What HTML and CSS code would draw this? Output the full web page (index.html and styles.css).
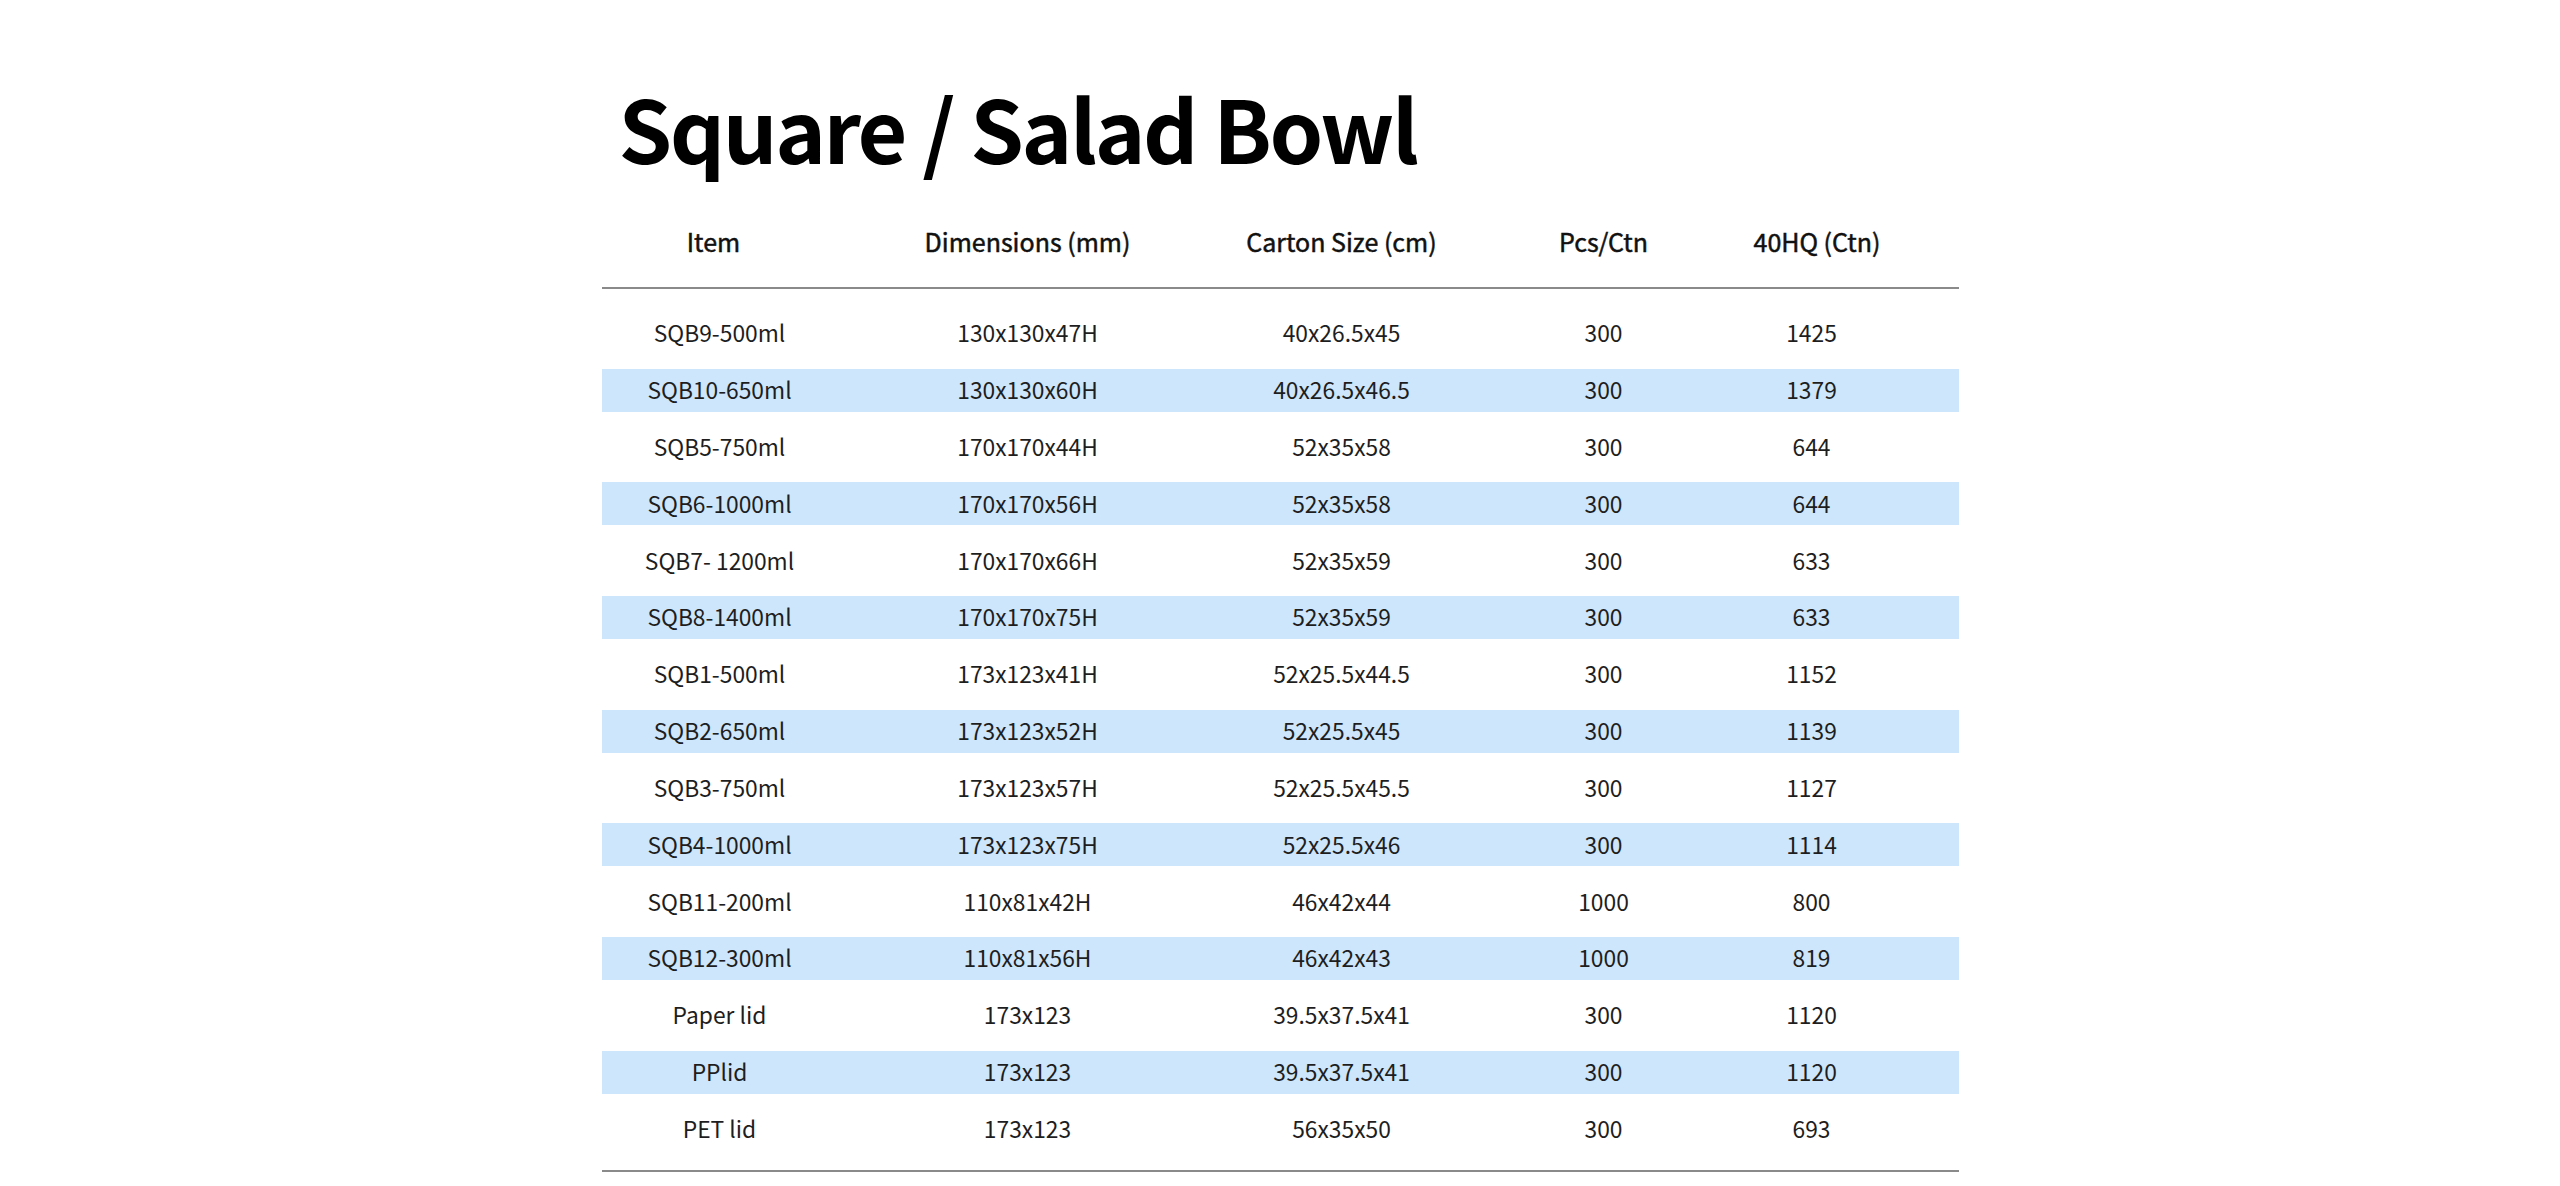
FILE: index.html
```html
<!DOCTYPE html>
<html lang="en">
<head>
<meta charset="utf-8">
<title>Square / Salad Bowl</title>
<link rel="stylesheet" href="styles.css">
</head>
<body>
<main class="sheet">
  <h1 class="title">Square / Salad Bowl</h1>
  <div class="table">
    <div class="row head">
      <div class="cell">Item</div>
      <div class="cell">Dimensions (mm)</div>
      <div class="cell">Carton Size (cm)</div>
      <div class="cell">Pcs/Ctn</div>
      <div class="cell">40HQ (Ctn)</div>
    </div>
    <div class="body">
      <div class="row"><div class="cell">SQB9-500ml</div><div class="cell">130x130x47H</div><div class="cell">40x26.5x45</div><div class="cell">300</div><div class="cell">1425</div></div>
      <div class="row alt"><div class="cell">SQB10-650ml</div><div class="cell">130x130x60H</div><div class="cell">40x26.5x46.5</div><div class="cell">300</div><div class="cell">1379</div></div>
      <div class="row"><div class="cell">SQB5-750ml</div><div class="cell">170x170x44H</div><div class="cell">52x35x58</div><div class="cell">300</div><div class="cell">644</div></div>
      <div class="row alt"><div class="cell">SQB6-1000ml</div><div class="cell">170x170x56H</div><div class="cell">52x35x58</div><div class="cell">300</div><div class="cell">644</div></div>
      <div class="row"><div class="cell">SQB7- 1200ml</div><div class="cell">170x170x66H</div><div class="cell">52x35x59</div><div class="cell">300</div><div class="cell">633</div></div>
      <div class="row alt"><div class="cell">SQB8-1400ml</div><div class="cell">170x170x75H</div><div class="cell">52x35x59</div><div class="cell">300</div><div class="cell">633</div></div>
      <div class="row"><div class="cell">SQB1-500ml</div><div class="cell">173x123x41H</div><div class="cell">52x25.5x44.5</div><div class="cell">300</div><div class="cell">1152</div></div>
      <div class="row alt"><div class="cell">SQB2-650ml</div><div class="cell">173x123x52H</div><div class="cell">52x25.5x45</div><div class="cell">300</div><div class="cell">1139</div></div>
      <div class="row"><div class="cell">SQB3-750ml</div><div class="cell">173x123x57H</div><div class="cell">52x25.5x45.5</div><div class="cell">300</div><div class="cell">1127</div></div>
      <div class="row alt"><div class="cell">SQB4-1000ml</div><div class="cell">173x123x75H</div><div class="cell">52x25.5x46</div><div class="cell">300</div><div class="cell">1114</div></div>
      <div class="row"><div class="cell">SQB11-200ml</div><div class="cell">110x81x42H</div><div class="cell">46x42x44</div><div class="cell">1000</div><div class="cell">800</div></div>
      <div class="row alt"><div class="cell">SQB12-300ml</div><div class="cell">110x81x56H</div><div class="cell">46x42x43</div><div class="cell">1000</div><div class="cell">819</div></div>
      <div class="row"><div class="cell">Paper lid</div><div class="cell">173x123</div><div class="cell">39.5x37.5x41</div><div class="cell">300</div><div class="cell">1120</div></div>
      <div class="row alt"><div class="cell">PPlid</div><div class="cell">173x123</div><div class="cell">39.5x37.5x41</div><div class="cell">300</div><div class="cell">1120</div></div>
      <div class="row"><div class="cell">PET lid</div><div class="cell">173x123</div><div class="cell">56x35x50</div><div class="cell">300</div><div class="cell">693</div></div>
    </div>
  </div>
</main>
</body>
</html>
```

FILE: styles.css
```css
html, body {
  margin: 0;
  padding: 0;
  background: #ffffff;
}

body {
  font-family: "Noto Sans CJK SC", "Noto Sans", sans-serif;
  color: #1e1e1e;
}

.sheet {
  width: 1357px;
  margin: 0 auto;
  padding-top: 67px;
}

.title {
  margin: 0;
  padding-left: 17px;
  font-size: 86px;
  font-weight: 700;
  line-height: 120px;
  color: #000000;
  letter-spacing: -2.4px;
}

.table {
  margin-top: 14px;
}

.row {
  box-sizing: border-box;
  display: grid;
  grid-template-columns: 224px 404px 224px 300px 116px;
  height: 43px;
  padding-bottom: 1.5px;
  align-items: center;
  font-size: 22.8px;
}

.cell {
  text-align: center;
  white-space: nowrap;
}

.body .cell:first-child {
  padding-left: 12px;
}

.head {
  height: 88px;
  padding-bottom: 7px;
  font-size: 25px;
  font-weight: 400;
  color: #111111;
  -webkit-text-stroke: 0.5px #111111;
  border-bottom: 2px solid #8a8a8a;
}

.body {
  display: flex;
  flex-direction: column;
  gap: 13.83px;
  padding-top: 23px;
  padding-bottom: 19px;
  border-bottom: 2px solid #8a8a8a;
}

.alt {
  background: #cde6fc;
}
```
